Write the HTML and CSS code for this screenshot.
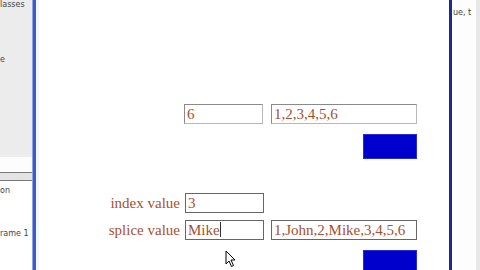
FILE: index.html
```html
<!DOCTYPE html>
<html>
<head>
<meta charset="utf-8">
<link rel="stylesheet" href="styles.css">
</head>
<body>
<div class="screen">
  <div class="left">
    <div class="left-top">
      <div class="ltext t1">lasses</div>
      <div class="ltext t2">e</div>
    </div>
    <div class="left-gap"></div>
    <div class="left-bar"></div>
    <div class="left-bottom">
      <div class="ltext t3">on</div>
      <div class="ltext t4">rame 1</div>
    </div>
  </div>
  <div class="vbar"></div>
  <div class="edge"></div>
  <div class="main">
    <div class="row r1">
      <span class="label"></span>
      <div class="field f1">6</div>
      <div class="field f2">1,2,3,4,5,6</div>
    </div>
    <div class="btnrow b1"><div class="btn"></div></div>
    <div class="row r3">
      <span class="label">index value</span>
      <div class="field f1">3</div>
      <span></span>
    </div>
    <div class="row r4">
      <span class="label">splice value</span>
      <div class="field f1 focus">Mike<span class="caret"></span></div>
      <div class="field f2">1,John,2,Mike,3,4,5,6</div>
    </div>
    <div class="btnrow b2"><div class="btn"></div></div>
    <svg class="cursor" width="12" height="18" viewBox="0 0 12 18">
      <path d="M1 1 L1 14 L4 11 L6.5 16.5 L8.5 15.5 L6 10 L10 10 Z" fill="#fff" stroke="#000" stroke-width="1"/>
    </svg>
  </div>
  <div class="rbar"></div>
  <div class="right">
    <div class="rtext">ue, t</div>
  </div>
  <div class="rstrip"></div>
</div>
</body>
</html>
```
FILE: styles.css
```css
* { box-sizing: border-box; }
html, body { margin: 0; padding: 0; background: #fff; }
.screen {
  width: 480px; height: 270px; overflow: hidden;
  display: flex;
  font-family: "Liberation Serif", "Times New Roman", serif;
}
.left {
  width: 32px; flex: none;
  display: flex; flex-direction: column;
  font-family: "DejaVu Sans", sans-serif; font-size: 8px; color: #444;
  background: #fff;
}
.left-top { height: 157px; background: #ececec; display: flex; flex-direction: column; }
.left-gap { height: 15px; background: #fdfdfd; }
.left-bar { height: 9px; background: #e4e4e4; border-top: 1px solid #777; border-bottom: 1px solid #777; }
.left-bottom { flex: 1; background: #fff; display: flex; flex-direction: column; }
.ltext { white-space: nowrap; line-height: 10px; }
.t1 { margin-top: 0; }
.t2 { margin-top: 45px; }
.t3 { margin-top: 5px; }
.t4 { margin-top: 33px; }
.vbar {
  width: 4px; flex: none;
  background: #3d5bc4;
  border-left: 1px solid #8fa3e0;
}
.edge { width: 3px; flex: none; background: #f4f6fc; }
.main {
  width: 410px; flex: none; position: relative;
  padding-top: 104px;
  background: #fff;
}
.row {
  display: grid;
  grid-template-columns: 145px 87px 146px;
  align-items: center;
}
.label {
  color: #a8502e; font-size: 15px; text-align: right; padding-right: 4px;
  line-height: 19px;
}
.field {
  height: 20px;
  border: 1px solid #8a8a8a;
  border-right-color: #b8b8b8; border-bottom-color: #b8b8b8;
  color: #a8502e; font-size: 15px; line-height: 18px;
  padding-left: 2px; white-space: nowrap; overflow: hidden;
}
.f1 { width: 79px; }
.f2 { width: 146px; padding-left: 2px; }
.focus { border-color: #555; }
.caret { display: inline-block; width: 1px; height: 15px; background: #333; vertical-align: -2px; }
.r3 .field, .r4 .field { border-color: #666; }
.r3 .f1 { margin-left: 1px; }
.r4 .f1 { margin-left: 1px; }
.btnrow { display: flex; justify-content: flex-end; padding-right: 32px; }
.b1 { margin-top: 10px; }
.r3 { margin-top: 34px; }
.r4 { margin-top: 7px; }
.b2 { margin-top: 10px; }
.btn {
  width: 54px; height: 25px;
  background: #0000cc;
  border: 1px solid #2a2ad8;
}
.cursor { position: absolute; left: 186px; top: 250px; }
.rbar { width: 3px; flex: none; background: #1c2a8a; }
.right { width: 24px; flex: none; background: #fdfdfd; font-family: "DejaVu Sans", sans-serif; font-size: 8px; color: #444; }
.rtext { margin-top: 8px; padding-left: 1px; white-space: nowrap; }
.rstrip { flex: 1; background: #e8e8e8; }
```
